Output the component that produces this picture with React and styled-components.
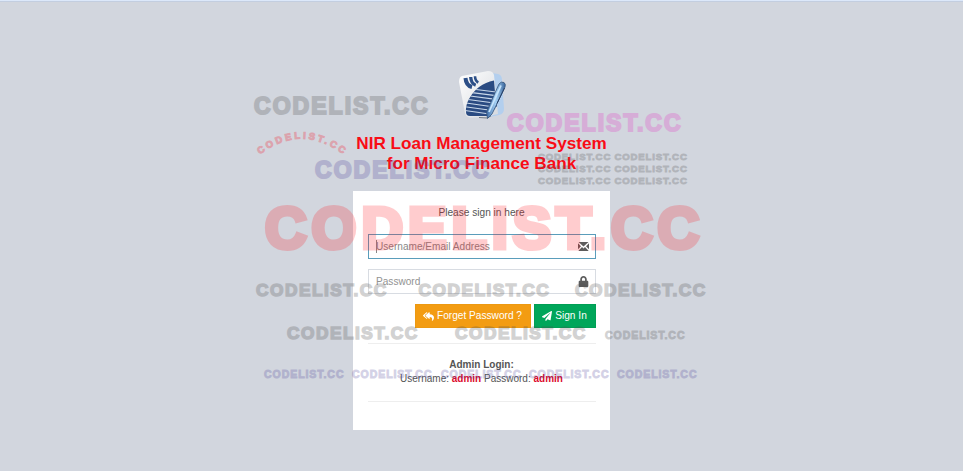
import React from "react";
import styled, { createGlobalStyle } from "styled-components";
import { FaReplyAll, FaPaperPlane, FaLock } from "react-icons/fa";

const Global = createGlobalStyle`
  * { box-sizing: border-box; }
  body { margin: 0; background: #d2d6de; overflow: hidden; }
`;

const Page = styled.main`
  position: relative;
  display: flex;
  flex-direction: column;
  align-items: center;
  height: 471px;
  padding-top: 65px;
  overflow: hidden;
  background: #d2d6de;
  border-top: 1px solid #dce8fa;
  box-shadow: inset 0 1px 0 #c3cee0;
  font: 10.15px/14px "Liberation Sans", Arial, sans-serif;
  color: #555;
`;

const Logo = styled.svg`
  width: 54px;
  height: 54px;
  flex: none;
`;

const Title = styled.h1`
  margin: 13px 0 18px;
  font-size: 17.15px;
  line-height: 20px;
  font-weight: 700;
  text-align: center;
  color: #f90c16;
`;

const Card = styled.section`
  width: 257px;
  height: 239px;
  padding: 15px 14px 15px 15px;
  background: #fff;
  flex: none;
`;

const Prompt = styled.p`
  margin: 0 1px 14px 0;
  text-align: center;
`;

const Field = styled.label`
  display: flex;
  align-items: center;
  justify-content: space-between;
  height: 25px;
  margin-bottom: 10px;
  padding: 0 6px 0 7px;
  border: 1px solid ${(p) => (p.$focused ? "#5a9dbb" : "#d8dce2")};
  color: ${(p) => (p.$focused ? "#888" : "#929292")};
  svg { color: #5c5c5c; }
`;

const Placeholder = styled.span`
  padding-top: 1px;
  font-size: 10.1px;
  line-height: 12px;
  box-shadow: ${(p) => (p.$caret ? "inset 1px 0 0 #888" : "none")};
`;

const Actions = styled.div`
  display: flex;
  justify-content: flex-end;
  gap: 3px;
`;

const Button = styled.button`
  display: flex;
  align-items: center;
  justify-content: center;
  gap: 3px;
  width: ${(p) => p.$width}px;
  height: 24px;
  padding: 0 1px 0 0;
  border: 1px solid ${(p) => p.$edge};
  background: ${(p) => p.$fill};
  color: #fff;
  font: inherit;
`;

const Rule = styled.hr`
  height: 1px;
  margin: ${(p) => p.$top}px 0 0;
  border: 0;
  background: #eee;
`;

const Credentials = styled.p`
  margin: 14px 1px 0 0;
  font-size: 10px;
  text-align: center;
  em { color: #dc0a2c; font-style: normal; font-weight: 700; }
`;

const Overlay = styled.div`
  position: absolute;
  inset: 0;
  pointer-events: none;
`;

const Mark = styled.span`
  position: absolute;
  left: ${(p) => p.$x}px;
  top: ${(p) => p.$y}px;
  font-family: "Liberation Sans", Arial, sans-serif;
  font-size: ${(p) => p.$size * 0.96}px;
  font-weight: 700;
  line-height: ${(p) => p.$size}px;
  letter-spacing: 0.087em;
  white-space: nowrap;
  color: ${(p) => p.$color};
  -webkit-text-stroke: 0.085em ${(p) => p.$color};
  opacity: ${(p) => p.$opacity};
`;

const Arc = styled.svg`
  position: absolute;
  left: 250px;
  top: 124px;
  width: 104px;
  height: 40px;
  overflow: visible;
  opacity: 0.33;
  font: 700 9.5px "Liberation Sans", Arial, sans-serif;
`;

const gray = ["#505050", 0.25];
const violet = ["#463c96", 0.23];
const marks = [
  [254, 93, 24, gray],
  [315, 157, 24, violet],
  [507, 110, 24, ["#e250c8", 0.3]],
  ...[151, 163, 175].flatMap((y) => [[538, y, 10, gray], [614.5, y, 10, gray]]),
  [265, 197, 60, ["#ff141e", 0.21]],
  ...[256, 418.5, 575].map((x) => [x, 280, 18, gray]),
  [287, 323, 18, gray],
  [455, 323, 18, gray],
  [605, 329, 11, gray],
  ...[264, 352, 441, 529, 617].map((x) => [x, 368, 11, violet]),
];

function AppLogo() {
  return (
    <Logo viewBox="0 0 54 54">
      <defs>
        <linearGradient id="paper" x2="1" y2="1">
          <stop stopColor="#fff" />
          <stop offset="1" stopColor="#d5d9de" />
        </linearGradient>
        <linearGradient id="pen" x2="1">
          <stop stopColor="#3d6da8" />
          <stop offset=".5" stopColor="#a5d0f4" />
          <stop offset="1" stopColor="#38659c" />
        </linearGradient>
        <clipPath id="sail">
          <path d="M11 46Q10.500 39 14 33Q22 18 39 14.500L40 26L42 40L34 50L15 50Q11 50 11 46Z" />
        </clipPath>
      </defs>
      <path d="M34 6.500L43 8Q47 9 47 14L49 43Q49 48 44 49L35 51Z" fill="#b3cfee" />
      <path d="M7 10L33 5Q38 5 39 9L43 48Q29 52 15 51.500Q11 51 10 47L4 16Q4 11 7 10Z" fill="url(#paper)" />
      <path d="M24 51.500L32 52L36 50" fill="none" stroke="#5c646e" strokeWidth=".8" />
      <g clipPath="url(#sail)">
        <path d="M5 10H44V54H5Z" fill="#2a4b82" />
        <path
          d="M21 23.500L41 26M17 26.600L41 29.600M15 30L41 33.400M13 33.500L41 37.300M11 37L41 41.200M10 40.700L41 45M10 44.500L38 48.500"
          stroke="#c9d8ea"
          strokeWidth="1.15"
        />
      </g>
      <g fill="none" stroke="#2c4f87" strokeWidth="3.3">
        <path d="M10.500 12Q11 19.500 17 21" strokeWidth="4" />
        <path d="M15.700 11Q16 17.500 20.700 19.200" />
        <path d="M20 10.300Q20.200 15 23.300 16.500" strokeWidth="2.600" />
      </g>
      <path d="M44 18Q46 15 49 16.500Q51 18 50 21L37 48L32.500 52.500L31.500 46Z" fill="url(#pen)" stroke="#36547a" strokeWidth=".8" />
      <path d="M46 19.500L34 46" stroke="#c6e4fc" strokeWidth="1.800" />
      <path d="M49.500 22L42 37.500" stroke="#253e65" strokeWidth="1" />
    </Logo>
  );
}

function EnvelopeIcon() {
  return (
    <svg width="11" height="9" viewBox="0 0 11 9">
      <path d="M.5 0H10.500L5.500 4.600ZM0 1.300L3 4.200L0 7.200ZM11 1.300L8 4.200L11 7.200ZM.3 9L4 5L5.500 6.400L7 5L10.700 9Z" fill="currentColor" />
    </svg>
  );
}

export default function App() {
  return (
    <>
      <Global />
      <Page>
        <AppLogo />
        <Title>NIR Loan Management System<br />for Micro Finance Bank</Title>
        <Card>
          <Prompt>Please sign in here</Prompt>
          <Field $focused><Placeholder $caret>Username/Email Address</Placeholder><EnvelopeIcon /></Field>
          <Field><Placeholder>Password</Placeholder><FaLock size={11} /></Field>
          <Actions>
            <Button $width={116} $fill="#f39c12" $edge="#ec9912"><FaReplyAll size={11} />Forget Password ?</Button>
            <Button $width={62} $fill="#00a65a" $edge="#009f55"><FaPaperPlane size={10} />Sign In</Button>
          </Actions>
          <Rule $top={15} />
          <Credentials>
            <b>Admin Login:</b><br />
            Username: <em>admin</em> Password: <em>admin</em>
          </Credentials>
          <Rule $top={15} />
        </Card>
        <Overlay>
          {marks.map(([x, y, size, [color, opacity]]) => (
            <Mark key={`${x}-${y}`} $x={x} $y={y} $size={size} $color={color} $opacity={opacity}>CODELIST.CC</Mark>
          ))}
          <Arc viewBox="0 0 104 40">
            <path id="arc" d="M10 29.500Q51 -2 93.500 29.500L96 31.500" fill="none" />
            <text fill="#f03c4b" stroke="#f03c4b" strokeWidth="1"><textPath href="#arc" textLength="90">CODELIST.CC</textPath></text>
          </Arc>
        </Overlay>
      </Page>
    </>
  );
}
